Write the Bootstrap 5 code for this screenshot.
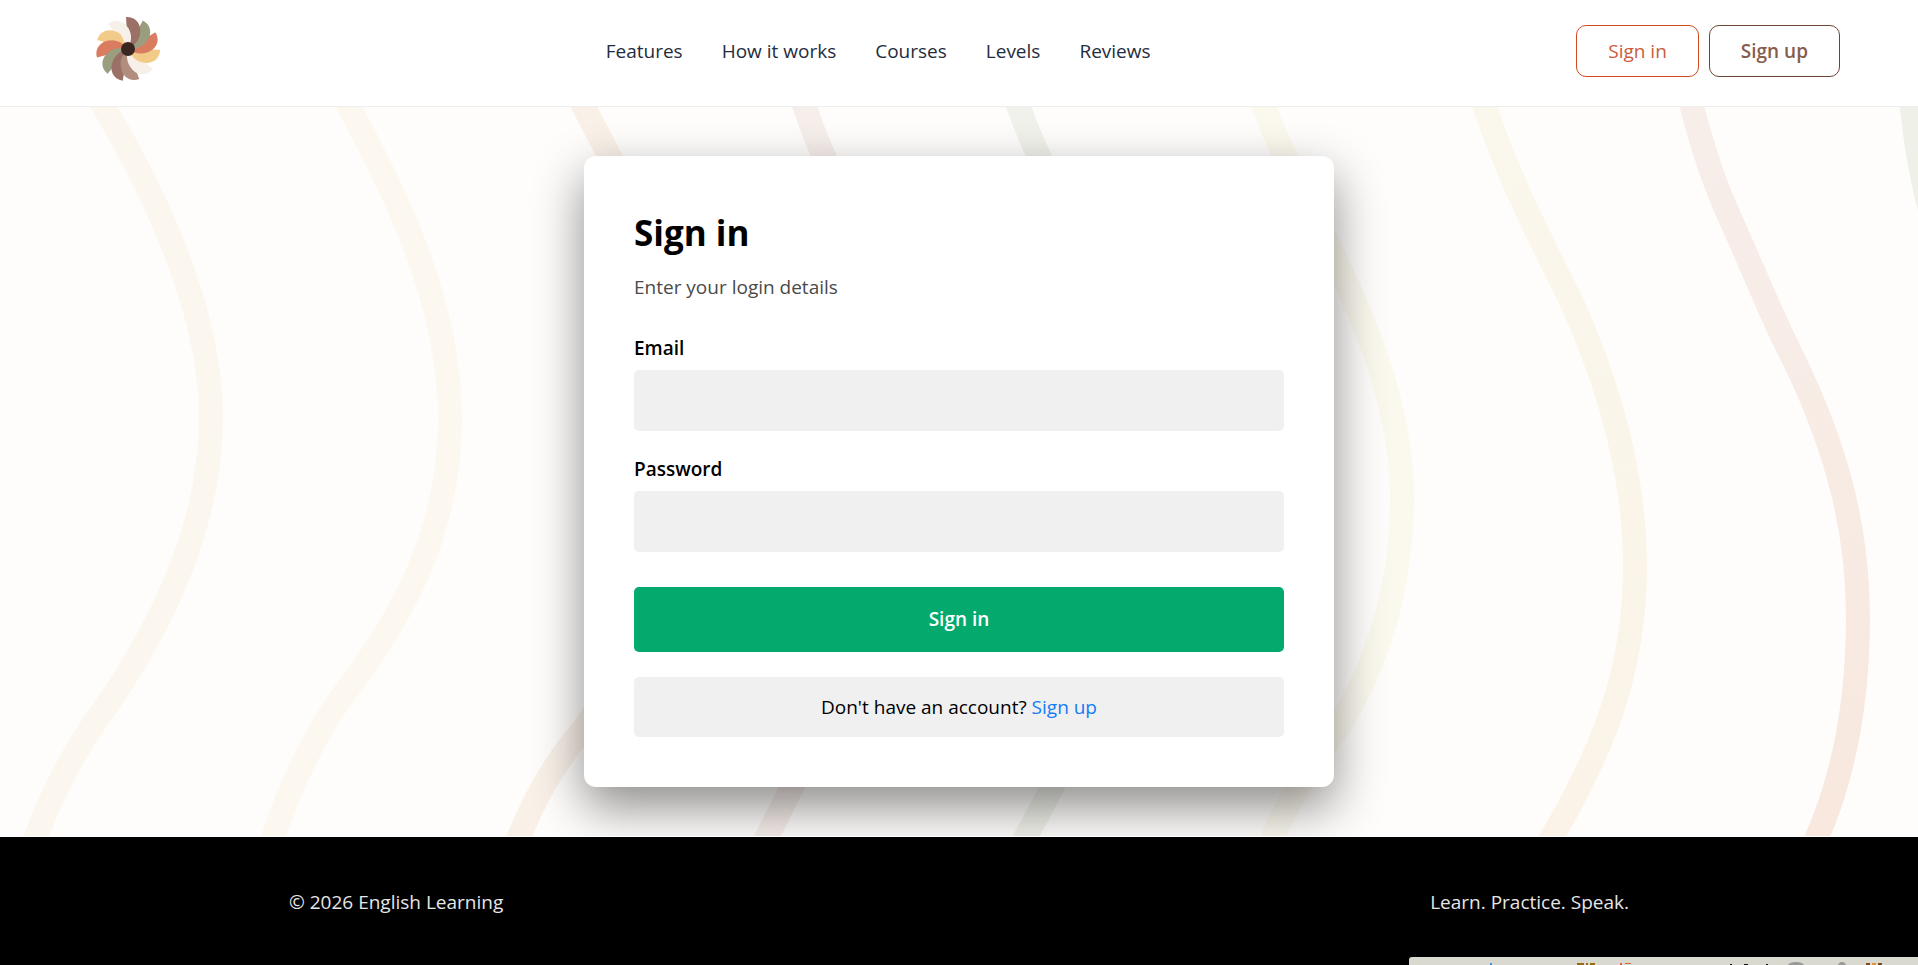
<!DOCTYPE html>
<html lang="en">
<head>
<meta charset="utf-8">
<meta name="viewport" content="width=device-width, initial-scale=1">
<title>Sign in</title>
<link href="https://cdn.jsdelivr.net/npm/bootstrap@5.3.0/dist/css/bootstrap.min.css" rel="stylesheet">
<style>
  body { font-family: "Open Sans", "Noto Sans", sans-serif; font-size: 19px; line-height: 30px; color: #000; background: #000; }
  .site-header { background: #fff; padding: 1px 78px 5px; border-bottom: 1px solid #eee; }
  .site-logo { width: 102px; height: 100px; }
  .site-nav { column-gap: 39px; }
  .site-nav a { color: #1f2d3d; }
  .btn-head { font-size: 19px; line-height: 30px; padding: 10px 31px; border-radius: 10px; }
  .btn-login { color: #cb5a3c; border-color: #cf4a1f; }
  .btn-join { color: #875c4c; border-color: #6f4535; font-weight: 600; }
  .head-actions { gap: 10px; }
  .hero { background: #fefdfb; padding: 49px 16px; border-bottom: 1px solid #fff; }
  .waves { fill: none; stroke-width: 24; }
  .login-card { max-width: 750px; padding: 50px; border: 0; border-radius: 12px; box-shadow: 0 20px 50px rgba(0, 0, 0, .45); }
  .login-card h1 { font-size: 35px; line-height: 54px; font-weight: 700; margin-bottom: 12px; }
  .lead-in { color: #4a4a4a; margin-bottom: 31px; }
  .login-card label { font-weight: 600; margin-bottom: 7px; }
  .login-card .form-control { height: 61px; background: #f0f0f0; border: 0; border-radius: 5px; }
  .field { margin-bottom: 23px; }
  .btn-submit { height: 65px; margin: 35px 0 25px; font-size: 19px; font-weight: 600; color: #fff; background: #04aa6d; border: 0; border-radius: 5px; }
  .join-note { background: #f0f0f0; border-radius: 5px; padding: 15px; }
  .join-note a { color: #147cf5; }
  .site-footer { color: #e6e6e6; padding-top: 50px; }
  .footer-row { max-width: 1340px; }
  .corner-bar { width: 509px; height: 8px; background: #d9d9cf; border-radius: 3px 0 0 0; }
</style>
</head>
<body class="d-flex flex-column min-vh-100">

<header class="site-header d-flex flex-wrap align-items-center justify-content-between">
  <a href="#" aria-label="English Learning">
    <svg class="site-logo d-block" viewBox="0 0 102 100" aria-hidden="true">
      <defs><path id="petal" d="M0 0 L-2 -32 C8 -33 14 -24 12 -15 C11 -8 6 -3 0 0Z"/></defs>
      <g transform="translate(50 48)">
        <use href="#petal" fill="#f7f0e9" transform="rotate(-35)"/>
        <use href="#petal" fill="#f2cb88" transform="rotate(-70)"/>
        <use href="#petal" fill="#d97c60" transform="rotate(-102)"/>
        <use href="#petal" fill="#9b9e7e" transform="rotate(-137)"/>
        <use href="#petal" fill="#9b7066" transform="rotate(-167)"/>
        <use href="#petal" fill="#b08d7c" transform="rotate(163)"/>
        <use href="#petal" fill="#f7f0e9" transform="rotate(132)"/>
        <use href="#petal" fill="#f2cb88" transform="rotate(95)"/>
        <use href="#petal" fill="#d97c60" transform="rotate(62)"/>
        <use href="#petal" fill="#9b9e7e" transform="rotate(31)"/>
        <use href="#petal" fill="#9b7066" transform="rotate(0)"/>
        <path fill="#f7f0e9" transform="rotate(-35)" d="M0 0 L4 -27 C11 -25 13 -19 12 -15 C11 -8 6 -3 0 0Z"/>
        <circle r="7" fill="#3a2521"/>
      </g>
    </svg>
  </a>
  <nav class="site-nav d-flex flex-wrap">
    <a class="text-decoration-none" href="#">Features</a>
    <a class="text-decoration-none" href="#">How it works</a>
    <a class="text-decoration-none" href="#">Courses</a>
    <a class="text-decoration-none" href="#">Levels</a>
    <a class="text-decoration-none" href="#">Reviews</a>
  </nav>
  <div class="head-actions d-flex">
    <button type="button" class="btn btn-head btn-login">Sign in</button>
    <button type="button" class="btn btn-head btn-join">Sign up</button>
  </div>
</header>

<main class="hero position-relative overflow-hidden">
  <svg class="waves position-absolute top-0 start-0 w-100 h-100" viewBox="0 0 1918 729" preserveAspectRatio="xMidYMid slice" aria-hidden="true">
    <defs>
      <linearGradient id="sand" x1="0" y1="0" x2="0" y2="1"><stop offset="0" stop-color="#faf7ec"/><stop offset="1" stop-color="#fbf3e7"/></linearGradient>
      <linearGradient id="rose" x1="0" y1="0" x2="0" y2="1"><stop offset="0" stop-color="#f7eeea"/><stop offset="1" stop-color="#f8e8de"/></linearGradient>
    </defs>
    <path stroke="#fbf6ee" d="M94 -18 L104 0 C150 78 211 200 211 310 C211 410 170 510 98 611 C75 643 50 690 37 728 L30 748"/>
    <path stroke="#fcf8f0" d="M339 -18 L349 0 C395 85 450 195 450 312 C450 415 410 500 347 583 C315 625 290 680 274 728 L267 748"/>
    <path stroke="#f9f0e8" d="M575 -18 L584 0 C630 90 695 200 695 320 C695 430 650 530 584 621 C555 655 535 690 520 728 L511 748"/>
    <path stroke="#f6eeeb" d="M796 -18 L805 0 C840 110 930 220 930 340 C930 450 830 580 792 680 L757 750"/>
    <path stroke="#f1f1eb" d="M1010 -18 L1019 0 C1055 110 1160 220 1160 350 C1160 460 1090 580 1052 681 L1015 750"/>
    <path stroke="#fbf8ee" d="M1256 -22 L1264 0 C1300 100 1402 240 1402 390 C1402 500 1365 580 1335 625 C1310 660 1287 695 1274 728 L1266 748"/>
    <path stroke="url(#sand)" d="M1478 -20 L1485 0 C1510 75 1540 130 1572 196 C1610 280 1635 370 1635 460 C1635 560 1605 640 1553 728 L1541 748"/>
    <path stroke="url(#rose)" d="M1687 -20 L1692 0 C1705 50 1718 85 1730 111 C1750 155 1770 205 1789 243 C1830 325 1858 410 1858 510 C1858 590 1845 665 1818 728 L1809 748"/>
    <path stroke="#eff0e8" d="M1910 -20 L1912 0 C1916 40 1921 70 1930 101"/>
  </svg>

  <div class="login-card card mx-auto">
    <h1>Sign in</h1>
    <p class="lead-in">Enter your login details</p>
    <form>
      <div class="field">
        <label class="d-block" for="email">Email</label>
        <input type="email" class="form-control" id="email">
      </div>
      <div class="field">
        <label class="d-block" for="password">Password</label>
        <input type="password" class="form-control" id="password">
      </div>
      <button type="submit" class="btn btn-submit w-100 d-block">Sign in</button>
    </form>
    <div class="join-note text-center">Don't have an account? <a class="text-decoration-none" href="#">Sign up</a></div>
  </div>
</main>

<footer class="site-footer flex-grow-1">
  <div class="footer-row d-flex flex-wrap justify-content-between mx-auto">
    <span>© 2026 English Learning</span>
    <span>Learn. Practice. Speak.</span>
  </div>
</footer>

<div class="corner-bar position-fixed bottom-0 end-0 overflow-hidden">
  <svg class="d-block" width="509" height="8" viewBox="0 0 509 8" aria-hidden="true">
    <path fill="#3f8fe0" d="M81 6h2v2h-2z"/>
    <path fill="#98690f" d="M168 6h7v2h-7zM177 6h2v2h-2zM181 6h5v2h-5z"/>
    <path fill="#d9662b" d="M211 6h2v2h-2zM216 6h6v1h-6z"/>
    <path fill="#111" d="M321 7h2v1h-2zM335 7h4v1h-4zM357 7h2v1h-2z"/>
    <path fill="#999" d="M379 8q2-3 8-3t8 3zM429 8q1-3 4-3t4 3z"/>
    <path fill="#7a4a22" d="M457 6h4v2h-4zM469 6h4v2h-4z"/>
    <path fill="#e2932f" d="M463 6h4v2h-4z"/>
  </svg>
</div>

<script src="https://cdn.jsdelivr.net/npm/bootstrap@5.3.0/dist/js/bootstrap.bundle.min.js"></script>
</body>
</html>
